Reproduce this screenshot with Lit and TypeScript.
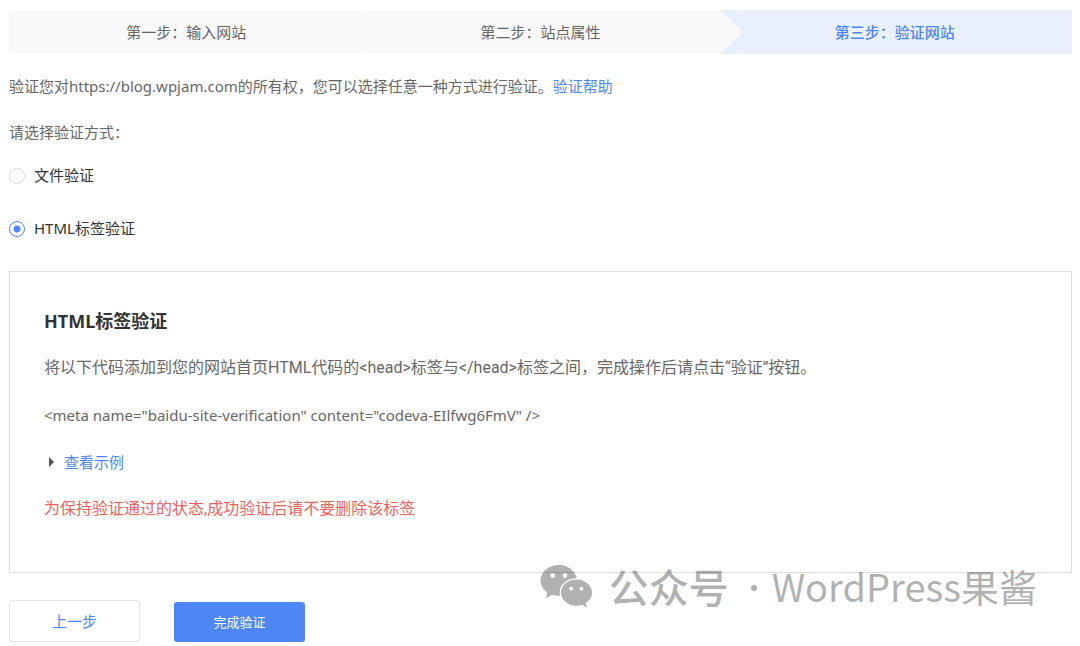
import { LitElement, html, css } from "lit";
import { customElement, state } from "lit/decorators.js";
import { classMap } from "lit/directives/class-map.js";

const STEPS = ["第一步：输入网站", "第二步：站点属性", "第三步：验证网站"];

const METHODS = [
  { id: "file", label: "文件验证" },
  { id: "html", label: "HTML标签验证" },
];

@customElement("step-bar")
class StepBar extends LitElement {
  static styles = css`
    :host {
      display: block;
    }
    .steps {
      display: grid;
      grid-template-columns: repeat(3, 1fr);
      margin: 0;
      padding: 0;
      list-style: none;
    }
    .step {
      position: relative;
      height: 44px;
      line-height: 44px;
      text-align: center;
      background: #f9f9f9;
      color: #666;
    }
    .current {
      background: #eaf1fe;
      color: #4e86f6;
      font-weight: 500;
    }
    .arrow {
      position: absolute;
      left: 0;
      top: 0;
      width: 24px;
      height: 44px;
    }
  `;

  render() {
    return html`<ol class="steps">
      ${STEPS.map(
        (text, i) => html`<li
          class=${classMap({ step: true, current: i === 2 })}
          aria-current=${i === 2 ? "step" : "false"}
        >
          ${i > 0
            ? html`<svg class="arrow" viewBox="0 0 24 44" aria-hidden="true">
                <path d="M0 0H1L23 22L1 44H0Z" fill="#f9f9f9" />
                <path d="M1 0L23 22L1 44" fill="none" stroke="#fff" />
              </svg>`
            : ""}${text}
        </li>`
      )}
    </ol>`;
  }
}

@customElement("account-mark")
class AccountMark extends LitElement {
  static styles = css`
    :host {
      display: flex;
      align-items: center;
      color: #000;
      opacity: 0.3;
      font-size: 38px;
      line-height: 48px;
      white-space: nowrap;
      font-family: "Noto Sans CJK SC", sans-serif;
    }
    .logo {
      width: 52px;
      height: 44px;
      margin-right: 17px;
    }
    .kind {
      font-size: 40px;
      font-weight: 500;
    }
    .dot {
      width: 6px;
      height: 6px;
      margin: 4px 15px 0 22px;
      border-radius: 50%;
      background: currentColor;
    }
  `;

  render() {
    return html`
      <svg class="logo" viewBox="0 0 52 44" aria-hidden="true">
        <path
          fill="currentColor"
          fill-rule="evenodd"
          d="M19 1C8.800 1 .500 7.800 .500 16.500C.500 21.300 3 25.500 7.200 28.300L6 34L12.300 30.800C14.900 31.600 17.400 32 20.300 31.700C19.900 30.500 19.700 29.300 19.700 28C19.700 20.200 27.500 14.300 36.800 14.300C35.100 6.600 28 1 19 1ZM12.700 9.200A2.400 2.400 0 1 1 12.700 14A2.400 2.400 0 1 1 12.700 9.200ZM25.100 9.200A2.400 2.400 0 1 1 25.100 14A2.400 2.400 0 1 1 25.100 9.200Z"
        />
        <path
          fill="currentColor"
          fill-rule="evenodd"
          d="M36.500 15.500C28 15.500 21 21.200 21 28.500C21 35.800 28 41.700 36.500 41.700C38.500 41.700 40.400 41.400 42.200 40.800L47 43.500L45.800 39C49.600 36.600 52 32.900 52 28.500C52 21.200 45 15.500 36.500 15.500ZM31.200 22.700A2 2 0 1 1 31.200 26.700A2 2 0 1 1 31.200 22.700ZM41.400 22.700A2 2 0 1 1 41.400 26.700A2 2 0 1 1 41.400 22.700Z"
        />
      </svg>
      <span class="kind">公众号</span>
      <span class="dot"></span>
      <span>WordPress果酱</span>
    `;
  }
}

@customElement("app-root")
class AppRoot extends LitElement {
  @state() private method = "html";

  static styles = css`
    :host {
      display: block;
      box-sizing: border-box;
      padding: 10px 8px 4px 9px;
      background: #fff;
      color: #666;
      font-family: "Noto Sans", "Noto Sans CJK SC", sans-serif;
      font-size: 15px;
      line-height: 24px;
    }
    p {
      margin: 0;
    }
    a {
      color: #4e86f6;
      text-decoration: none;
    }
    .intro {
      margin-top: 20px;
    }
    .ask {
      margin-top: 22px;
    }
    .methods {
      display: grid;
      gap: 29px;
      margin: 19px 0 0;
      padding: 0;
      border: 0;
    }
    .method {
      display: flex;
      align-items: center;
      gap: 9px;
      color: #333;
    }
    .radio {
      appearance: none;
      box-sizing: border-box;
      width: 16px;
      height: 16px;
      margin: 2px 0 0;
      border: 1px solid #ddd;
      border-radius: 50%;
      background: #fff;
    }
    .radio:checked {
      border-color: #4e86f6;
      background: radial-gradient(circle, #4e86f6 3px, #fff 4px);
    }
    .panel {
      display: grid;
      gap: 23px;
      margin-top: 31px;
      padding: 37px 34px 51px;
      border: 1px solid #ddd;
    }
    .title {
      margin: 0;
      color: #333;
      font-size: 18px;
      line-height: 24px;
      font-weight: 700;
    }
    .text {
      font-family: Roboto, "Noto Sans CJK SC", sans-serif;
      font-size: 16px;
    }
    .example {
      display: flex;
      align-items: center;
      gap: 10px;
      padding-left: 5px;
    }
    .caret {
      width: 5px;
      height: 10px;
    }
    .warn {
      color: #f0625d;
    }
    .foot {
      position: relative;
      display: flex;
      align-items: flex-end;
      gap: 34px;
      margin-top: 27px;
    }
    .btn {
      box-sizing: border-box;
      min-width: 131px;
      padding: 0 16px;
      border-radius: 3px;
      font: inherit;
      cursor: pointer;
    }
    .back {
      height: 42px;
      border: 1px solid #e4e4e4;
      background: #fff;
      color: #4e86f6;
    }
    .done {
      height: 40px;
      border: 0;
      background: #4e86f6;
      color: #fff;
      font-size: 13px;
    }
    .mark {
      position: absolute;
      right: 35px;
      top: -38px;
    }
  `;

  render() {
    return html`
      <step-bar></step-bar>
      <p class="intro">
        验证您对https://blog.wpjam.com的所有权，您可以选择任意一种方式进行验证。<a href="#help">验证帮助</a>
      </p>
      <p class="ask" id="ask">请选择验证方式：</p>
      <fieldset class="methods" aria-labelledby="ask">
        ${METHODS.map(
          (m) => html`<label class="method">
            <input
              class="radio"
              type="radio"
              name="method"
              .checked=${this.method === m.id}
              @change=${() => (this.method = m.id)}
            />
            <span>${m.label}</span>
          </label>`
        )}
      </fieldset>
      <section class="panel">
        <h2 class="title">HTML标签验证</h2>
        <p class="text">将以下代码添加到您的网站首页HTML代码的&lt;head&gt;标签与&lt;/head&gt;标签之间，完成操作后请点击“验证”按钮。</p>
        <p>&lt;meta name="baidu-site-verification" content="codeva-EIlfwg6FmV" /&gt;</p>
        <p class="example">
          <svg class="caret" viewBox="0 0 5 10" aria-hidden="true">
            <path d="M0 0L5 5L0 10Z" fill="#555" />
          </svg>
          <a href="#example">查看示例</a>
        </p>
        <p class="text warn">为保持验证通过的状态,成功验证后请不要删除该标签</p>
      </section>
      <div class="foot">
        <button class="btn back" type="button">上一步</button>
        <button class="btn done" type="button">完成验证</button>
        <account-mark class="mark"></account-mark>
      </div>
    `;
  }
}
